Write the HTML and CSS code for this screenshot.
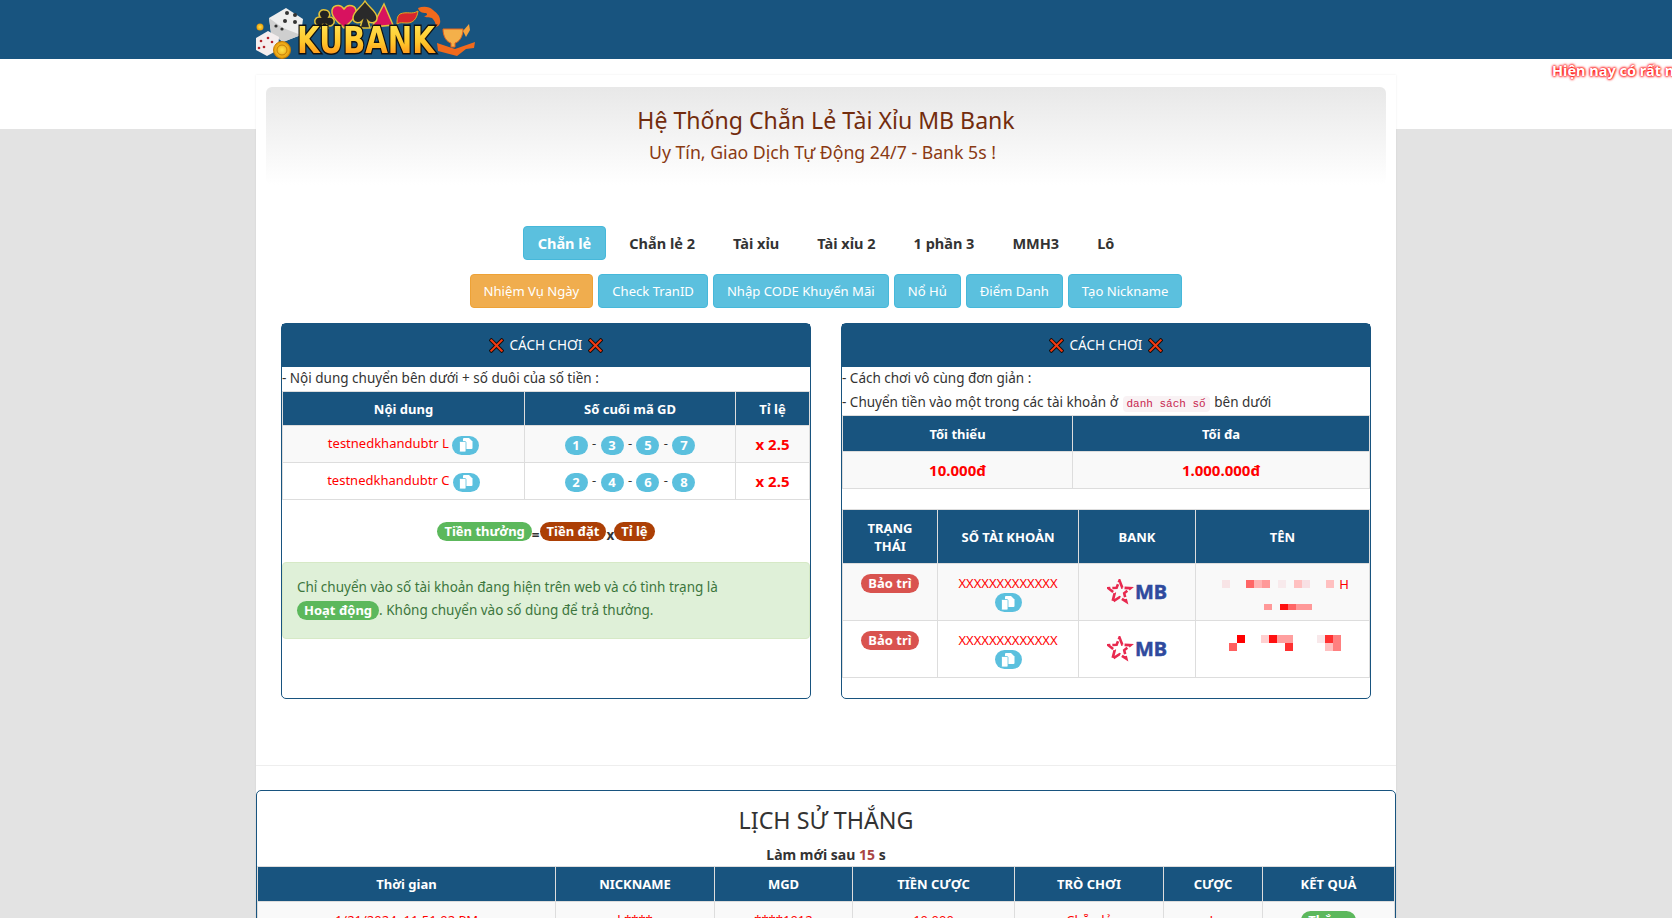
FILE: index.html
```html
<!DOCTYPE html>
<html lang="vi">
<head>
    <meta charset="UTF-8">
    <meta name="viewport" content="width=device-width, initial-scale=1.0">
    <title>Hệ Thống Chẵn Lẻ Tài Xỉu MB Bank</title>
    <link rel="stylesheet" href="styles.css">
</head>
<body>
    <svg class="defs" width="0" height="0">
        <defs>
            <symbol id="copy" viewBox="0 0 14 14">
                <path fill="#fff" d="M5 0h5l3.500 3.500V10a1 1 0 0 1-1 1H5a1 1 0 0 1-1-1V1a1 1 0 0 1 1-1z"/>
                <path fill="#fff" stroke="#5bc0de" stroke-width=".8" d="M1.500 3.500H6a1 1 0 0 1 1 1V13a1 1 0 0 1-1 1H1.500a1 1 0 0 1-1-1V4.500a1 1 0 0 1 1-1z"/>
            </symbol>
            <symbol id="cross" viewBox="0 0 16 16">
                <path fill="none" stroke="#111" stroke-width="4.200" stroke-linecap="square" d="M2.500 2.500l11 11M13.500 2.500l-11 11"/>
                <path fill="none" stroke="#f23a12" stroke-width="2.200" stroke-linecap="square" d="M2.500 2.500l11 11M13.500 2.500l-11 11"/>
            </symbol>
            <symbol id="mb" viewBox="0 0 60 26">
                <path fill="none" stroke="#e8294f" stroke-width="2.600" stroke-dasharray="8 2" d="M12.500 1.500l2.800 7.200 8.200.5-6.300 5 2.100 8.500-6.800-4.500-7 4.500 2.200-8.500-6.300-5 8.200-.5z"/>
                <text x="28" y="20" class="mb-text">MB</text>
            </symbol>
            <linearGradient id="kb" x1="0" y1="0" x2="0" y2="1">
                <stop offset="0" stop-color="#ffe95a"/>
                <stop offset=".55" stop-color="#ffc62a"/>
                <stop offset="1" stop-color="#ff7a12"/>
            </linearGradient>
            <radialGradient id="gold">
                <stop offset="0" stop-color="#ffe24a"/>
                <stop offset="1" stop-color="#e89a08"/>
            </radialGradient>
        </defs>
    </svg>

    <header class="topbar">
        <svg class="logo" width="240" height="59" viewBox="0 0 240 59">
            <!-- xuc xac -->
            <path fill="#eeeeee" d="M19 18L36 8l17 11-2 16-18 7-12-9z"/>
            <path fill="#cfcfcf" d="M19 18l14 10 18 7-18 7-12-9z"/>
            <g fill="#333">
                <circle cx="37" cy="13" r="2"/><circle cx="45" cy="15" r="2"/><circle cx="35" cy="21" r="2"/><circle cx="45" cy="22" r="2"/>
                <circle cx="26" cy="26" r="1.600"/><circle cx="32" cy="29" r="1.600"/>
            </g>
            <path fill="#f4eeee" d="M6 38l12-7 11 6-1 13-11 6-11-6z"/>
            <g fill="#b3232b"><circle cx="11" cy="41" r="1.300"/><circle cx="18" cy="38" r="1.300"/><circle cx="14" cy="47" r="1.300"/><circle cx="9" cy="48" r="1.300"/><circle cx="22" cy="42" r="1.300"/></g>
            <circle cx="10" cy="27" r="3.500" fill="url(#gold)"/>
            <circle cx="32" cy="50" r="8.500" fill="url(#gold)" stroke="#c67d06"/>
            <circle cx="32" cy="50" r="5" fill="none" stroke="#c67d06"/>
            <!-- bai -->
            <g stroke="#e2c23a" stroke-width="1.500">
                <path fill="#222" d="M75 10a4.500 4.500 0 0 1 4 7 4.500 4.500 0 1 1-2 8l1 3h-7l1-3a4.500 4.500 0 1 1-2-8 4.500 4.500 0 0 1 5-7z"/>
                <path fill="#d8125f" d="M94 9c4-6 13-4 12 4-1 6-6 9-12 15-6-6-11-9-12-15-1-8 8-10 12-4z"/>
                <path fill="#d8125f" d="M134 4l9 21-21 2z"/>
                <path fill="#2a2a2a" d="M115 1c4 7 12 10 12 17 0 5-6 6-9 3l2 7h-10l2-7c-3 3-9 2-9-3 0-7 8-10 12-17z"/>
            </g>
            <path fill="#d8262e" stroke="#e0a820" d="M150 14c7-3 12 1 18-3-1 8-5 12-11 12-4 0-7-1-10 1 0-4 0-8 3-10z"/>
            <path fill="#f26a1c" d="M168 8c5-2 11-2 15 2 4 3 7 6 7 10 1 3-1 6-4 7 0-4-2-7-4-9-3-1-6 0-8-2 3 0 4-2 2-3-4 0-7-1-8-5z"/>
            <!-- cup -->
            <path fill="#f4b04a" stroke="#e8641a" d="M193 29h20c0 8-4 13-8 14v4h-4v-4c-4-1-8-6-8-14z"/>
            <path fill="#f26a1c" d="M187 43l18 6 20-7-1 6-8 1-9 7-19-5z"/>
            <path fill="#f6a23c" d="M213 31l6-7 1 6-4 7z"/>
            <text class="logo-text" x="47" y="53" textLength="138" lengthAdjust="spacingAndGlyphs">KUBANK</text>
        </svg>
    </header>

    <div class="notice">
        <span class="notice-text">Hiện nay có rất nhiều trang giả mạo, hãy kiểm tra kỹ địa chỉ web</span>
    </div>

    <main class="container">
        <section class="hero">
            <h1>Hệ Thống Chẵn Lẻ Tài Xỉu MB Bank</h1>
            <p>Uy Tín, Giao Dịch Tự Động 24/7 - Bank 5s !</p>
        </section>

        <nav class="tabs">
            <a class="tab active">Chẵn lẻ</a>
            <a class="tab">Chẵn lẻ 2</a>
            <a class="tab">Tài xỉu</a>
            <a class="tab">Tài xỉu 2</a>
            <a class="tab">1 phần 3</a>
            <a class="tab">MMH3</a>
            <a class="tab">Lô</a>
        </nav>

        <div class="actions">
            <a class="btn btn-warning">Nhiệm Vụ Ngày</a>
            <a class="btn">Check TranID</a>
            <a class="btn">Nhập CODE Khuyến Mãi</a>
            <a class="btn">Nổ Hủ</a>
            <a class="btn">Điểm Danh</a>
            <a class="btn">Tạo Nickname</a>
        </div>

        <div class="columns">
            <section class="panel">
                <div class="panel-head">
                    <svg class="cross"><use href="#cross"/></svg>
                    <span>CÁCH CHƠI</span>
                    <svg class="cross"><use href="#cross"/></svg>
                </div>
                <div class="line">- Nội dung chuyển bên dưới + số duôi của số tiền :</div>
                <table class="tbl tbl-rules">
                    <thead>
                        <tr><th class="c1">Nội dung</th><th class="c2">Số cuối mã GD</th><th>Tỉ lệ</th></tr>
                    </thead>
                    <tbody>
                        <tr>
                            <td class="red">testnedkhandubtr L <span class="copy"><svg><use href="#copy"/></svg></span></td>
                            <td><span class="num">1</span> - <span class="num">3</span> - <span class="num">5</span> - <span class="num">7</span></td>
                            <td class="red strong big">x 2.5</td>
                        </tr>
                        <tr>
                            <td class="red">testnedkhandubtr C <span class="copy"><svg><use href="#copy"/></svg></span></td>
                            <td><span class="num">2</span> - <span class="num">4</span> - <span class="num">6</span> - <span class="num">8</span></td>
                            <td class="red strong big">x 2.5</td>
                        </tr>
                    </tbody>
                </table>
                <div class="formula">
                    <span class="pill pill-green">Tiền thưởng</span><b>=</b><span class="pill pill-brown">Tiền đặt</span><b>x</b><span class="pill pill-brown">Tỉ lệ</span>
                </div>
                <div class="alert">
                    Chỉ chuyển vào số tài khoản đang hiện trên web và có tình trạng là
                    <br><span class="pill pill-green">Hoạt động</span>. Không chuyển vào số dùng để trả thưởng.
                </div>
            </section>

            <section class="panel">
                <div class="panel-head">
                    <svg class="cross"><use href="#cross"/></svg>
                    <span>CÁCH CHƠI</span>
                    <svg class="cross"><use href="#cross"/></svg>
                </div>
                <div class="line">- Cách chơi vô cùng đơn giản :</div>
                <div class="line">- Chuyển tiền vào một trong các tài khoản ở <code>danh sách số</code> bên dưới</div>
                <table class="tbl tbl-limit">
                    <thead>
                        <tr><th class="c1">Tối thiểu</th><th>Tối đa</th></tr>
                    </thead>
                    <tbody>
                        <tr><td class="red strong big">10.000đ</td><td class="red strong big">1.000.000đ</td></tr>
                    </tbody>
                </table>
                <table class="tbl tbl-bank">
                    <thead>
                        <tr>
                            <th class="c1">TRẠNG THÁI</th>
                            <th class="c2">SỐ TÀI KHOẢN</th>
                            <th class="c3">BANK</th>
                            <th>TÊN</th>
                        </tr>
                    </thead>
                    <tbody>
                        <tr>
                            <td class="top"><span class="pill pill-red">Bảo trì</span></td>
                            <td class="red top">XXXXXXXXXXXXX<br><span class="copy"><svg><use href="#copy"/></svg></span></td>
                            <td><svg class="mb"><use href="#mb"/></svg></td>
                            <td class="red top name">
                                <div class="name-line">
                                    <svg width="113" height="8" viewBox="0 0 113 8">
                                        <rect x="0" width="8" height="8" fill="#f8e4e6"/>
                                        <rect x="24" width="8" height="8" fill="#ff6666"/>
                                        <rect x="32" width="8" height="8" fill="#ffb3b3"/>
                                        <rect x="40" width="8" height="8" fill="#ff9999"/>
                                        <rect x="56" width="8" height="8" fill="#f8eaec"/>
                                        <rect x="72" width="8" height="8" fill="#ffc0c0"/>
                                        <rect x="80" width="8" height="8" fill="#f8e0e4"/>
                                        <rect x="104" width="8" height="8" fill="#ffc0c0"/>
                                    </svg>
                                    <span>H</span>
                                </div>
                                <svg class="name-two" width="48" height="6" viewBox="0 0 48 6">
                                    <rect x="0" width="8" height="6" fill="#ff9999"/>
                                    <rect x="16" width="8" height="6" fill="#ff1010"/>
                                    <rect x="24" width="8" height="6" fill="#ff6666"/>
                                    <rect x="32" width="16" height="6" fill="#ff9999"/>
                                </svg>
                            </td>
                        </tr>
                        <tr>
                            <td class="top"><span class="pill pill-red">Bảo trì</span></td>
                            <td class="red top">XXXXXXXXXXXXX<br><span class="copy"><svg><use href="#copy"/></svg></span></td>
                            <td><svg class="mb"><use href="#mb"/></svg></td>
                            <td class="top name">
                                <svg class="name-block" width="112" height="16" viewBox="0 0 112 16">
                                    <rect x="8" width="8" height="8" fill="#ff0000"/>
                                    <rect x="32" width="8" height="8" fill="#ffd0d0"/>
                                    <rect x="40" width="8" height="8" fill="#ff1010"/>
                                    <rect x="48" width="16" height="8" fill="#ff9f9f"/>
                                    <rect x="88" width="8" height="8" fill="#f8e8ea"/>
                                    <rect x="96" width="8" height="8" fill="#ff3030"/>
                                    <rect x="104" width="8" height="8" fill="#ff8080"/>
                                    <rect x="0" y="8" width="8" height="8" fill="#ff6060"/>
                                    <rect x="56" y="8" width="8" height="8" fill="#ff3030"/>
                                    <rect x="96" y="8" width="8" height="8" fill="#ffc0c0"/>
                                    <rect x="104" y="8" width="8" height="8" fill="#ff8080"/>
                                </svg>
                            </td>
                        </tr>
                    </tbody>
                </table>
            </section>
        </div>

        <hr class="divider">

        <section class="history">
            <h2>LỊCH SỬ THẮNG</h2>
            <div class="refresh">Làm mới sau <span>15</span> s</div>
            <table class="tbl tbl-history">
                <thead>
                    <tr>
                        <th class="c1">Thời gian</th>
                        <th class="c2">NICKNAME</th>
                        <th class="c3">MGD</th>
                        <th class="c4">TIỀN CƯỢC</th>
                        <th class="c5">TRÒ CHƠI</th>
                        <th class="c6">CƯỢC</th>
                        <th>KẾT QUẢ</th>
                    </tr>
                </thead>
                <tbody>
                    <tr>
                        <td class="red">1/21/2024, 11:51:02 PM</td>
                        <td class="red">k****</td>
                        <td class="red">****1012</td>
                        <td class="red">10.000</td>
                        <td class="red">Chẵn lẻ</td>
                        <td class="red">L</td>
                        <td><span class="pill pill-green">Thắng</span></td>
                    </tr>
                </tbody>
            </table>
        </section>
    </main>
</body>
</html>
```

FILE: styles.css
```css
html, body {
    height: 100vh;
    overflow: hidden;
}
body {
    margin: 0;
    background: #e3e3e3;
    color: #333;
    font-family: "Noto Sans", "Open Sans", sans-serif;
    font-size: 13.500px;
    line-height: 20px;
}
.defs {
    display: block;
    height: 0;
}
.mb-text {
    font-family: "Noto Sans", sans-serif;
    font-weight: 700;
    font-size: 20px;
    fill: #2f4a9e;
    stroke: #2f4a9e;
    stroke-width: 0.5px;
}
.topbar {
    height: 59px;
    background: #18547f;
}
.logo {
    display: block;
    margin-left: 250px;
    filter: blur(0.4px);
}
.logo-text {
    font-family: "DejaVu Sans", sans-serif;
    font-weight: 700;
    font-size: 37px;
    fill: url(#kb);
    stroke: #111;
    stroke-width: 3px;
    paint-order: stroke;
}
.notice {
    height: 70px;
    background: #fff;
    padding-left: 1552px;
    white-space: nowrap;
    overflow: hidden;
}
.notice-text {
    display: inline-block;
    margin-top: 1px;
    color: #fff;
    font-weight: 700;
    font-size: 14.500px;
    text-shadow: 0 0 3px #f00, 0 0 3px #f00, 0 0 2px #f00;
}

.container {
    position: relative;
    width: 1140px;
    margin: -54px 0 0 256px;
    padding-top: 12px;
    background: #fff;
    box-shadow: 0 0 2px rgba(0, 0, 0, 0.08);
}
.hero {
    margin: 0 10px;
    height: 98px;
    border-radius: 6px;
    text-align: center;
    color: #722c0d;
    background: linear-gradient(#e8e8e8, #fff);
}
.hero h1 {
    margin: 0;
    padding-top: 19px;
    font-size: 23.100px;
    line-height: 28px;
    font-weight: 400;
}
.hero p {
    margin: 5px 0 0;
    padding-right: 7px;
    font-size: 17.700px;
    line-height: 26px;
    color: #8a3a12;
}

.tabs, .actions {
    display: flex;
    justify-content: center;
}
.tabs {
    margin-top: 41px;
    gap: 8px;
}
.tab {
    height: 34px;
    padding: 0 14px;
    border: 1px solid transparent;
    border-radius: 4px;
    box-sizing: border-box;
    font-size: 14.500px;
    font-weight: 700;
    line-height: 32px;
    color: #333;
}
.tab.active {
    background: #5bc0de;
    border-color: #46b8da;
    color: #fff;
}
.actions {
    margin-top: 14px;
    gap: 5px;
}
.btn {
    height: 34px;
    padding: 0 13px;
    box-sizing: border-box;
    border: 1px solid #46b8da;
    border-radius: 4px;
    background: #5bc0de;
    color: #fff;
    font-size: 13.100px;
    line-height: 32px;
}
.btn-warning {
    background: #f0ad4e;
    border-color: #eea236;
}

.columns {
    display: flex;
    gap: 30px;
    padding: 15px 25px 0;
}
.panel {
    flex: 1;
    height: 376px;
    box-sizing: border-box;
    border: 1px solid #18547f;
    border-radius: 5px;
}
.panel-head {
    display: flex;
    justify-content: center;
    align-items: center;
    gap: 6px;
    height: 42px;
    padding-bottom: 1px;
    background: #18547f;
    color: #fff;
}
.cross {
    width: 15px;
    height: 15px;
}
.line {
    height: 24px;
    line-height: 23px;
    white-space: nowrap;
}
code {
    margin: 0 1px;
    padding: 2px 4px;
    border-radius: 4px;
    background: #f9f2f4;
    color: #c7254e;
    font-family: "Liberation Mono", monospace;
    font-size: 11px;
}

.tbl {
    width: 100%;
    table-layout: fixed;
    border-collapse: collapse;
    text-align: center;
}
.tbl th, .tbl td {
    box-sizing: border-box;
    padding: 0 4px;
    border: 1px solid #ddd;
}
.tbl td {
    font-size: 13px;
}
.tbl th {
    background: #18547f;
    color: #fff;
    font-size: 13px;
    font-weight: 700;
    height: 34px;
    line-height: 18px;
}
.tbl tbody tr:nth-child(odd) td {
    background: #f9f9f9;
}
.red {
    color: #f00;
}
.strong {
    font-weight: 700;
}
.tbl .big {
    font-size: 15px;
}
.tbl-rules td {
    height: 37px;
}
.tbl-rules .c1 { width: 242px; }
.tbl-rules .c2 { width: 211px; }
.tbl-limit th { height: 36px; }
.tbl-limit td { height: 37px; }
.tbl-limit .c1 { width: 230px; }
.tbl-bank {
    margin-top: 20px;
}
.tbl-bank th { height: 54px; padding: 0 10px; }
.tbl-bank td { height: 57px; }
.tbl-bank .c1 { width: 95px; }
.tbl-bank .c2 { width: 141px; }
.tbl-bank .c3 { width: 117px; }
.tbl-bank .top {
    vertical-align: top;
    padding-top: 9px;
}
.tbl-bank .copy {
    vertical-align: top;
}
.tbl-bank .name {
    padding-top: 13px;
}
.name-line {
    display: flex;
    justify-content: center;
    align-items: center;
    gap: 4px;
    height: 14px;
    padding-left: 6px;
}
.name-two {
    display: block;
    margin: 13px 0 0 64px;
}
.name-block {
    display: block;
    margin: 1px auto 0 29px;
}
.mb {
    display: block;
    width: 60px;
    height: 26px;
    margin: 0 auto;
}

.copy {
    display: inline-flex;
    justify-content: center;
    align-items: center;
    width: 27px;
    height: 19px;
    border-radius: 10px;
    background: #5bc0de;
    vertical-align: middle;
}
.copy svg {
    width: 14px;
    height: 14px;
}
.num {
    display: inline-block;
    width: 23px;
    height: 19px;
    margin: 0 1px;
    border-radius: 10px;
    background: #5bc0de;
    color: #fff;
    font-weight: 700;
    font-size: 13px;
    line-height: 19px;
    vertical-align: middle;
}
.pill {
    display: inline-block;
    padding: 0 7px;
    height: 19px;
    border-radius: 10px;
    color: #fff;
    font-size: 13px;
    font-weight: 700;
    line-height: 18px;
}
.pill-green { background: #5cb85c; }
.pill-brown { background: #ac3f05; }
.pill-red { background: #d9534f; }
.formula {
    margin-top: 22px;
    height: 40px;
    text-align: center;
    line-height: 19px;
}
.formula b {
    font-weight: 700;
    position: relative;
    top: 4px;
}
.alert {
    padding: 13px 14px 14px;
    height: 77px;
    box-sizing: border-box;
    border: 1px solid #d6e9c6;
    border-radius: 4px;
    background: #dff0d8;
    color: #3c763d;
    line-height: 23px;
}

.divider {
    margin: 66px 0 24px;
    border: 0;
    border-top: 1px solid #eee;
}
.history {
    border: 1px solid #18547f;
    border-radius: 5px;
    height: 300px;
}
.history h2 {
    margin: 0;
    padding-top: 12px;
    font-size: 23.300px;
    line-height: 34px;
    font-weight: 400;
    text-align: center;
}
.refresh {
    margin-top: 8px;
    height: 21px;
    text-align: center;
    font-weight: 700;
    font-size: 14px;
}
.refresh span {
    color: #a94442;
}
.tbl-history th {
    height: 35px;
}
.tbl-history td {
    height: 36px;
}
.tbl-history .c1 { width: 298px; }
.tbl-history .c2 { width: 159px; }
.tbl-history .c3 { width: 138px; }
.tbl-history .c4 { width: 162px; }
.tbl-history .c5 { width: 149px; }
.tbl-history .c6 { width: 99px; }
```
